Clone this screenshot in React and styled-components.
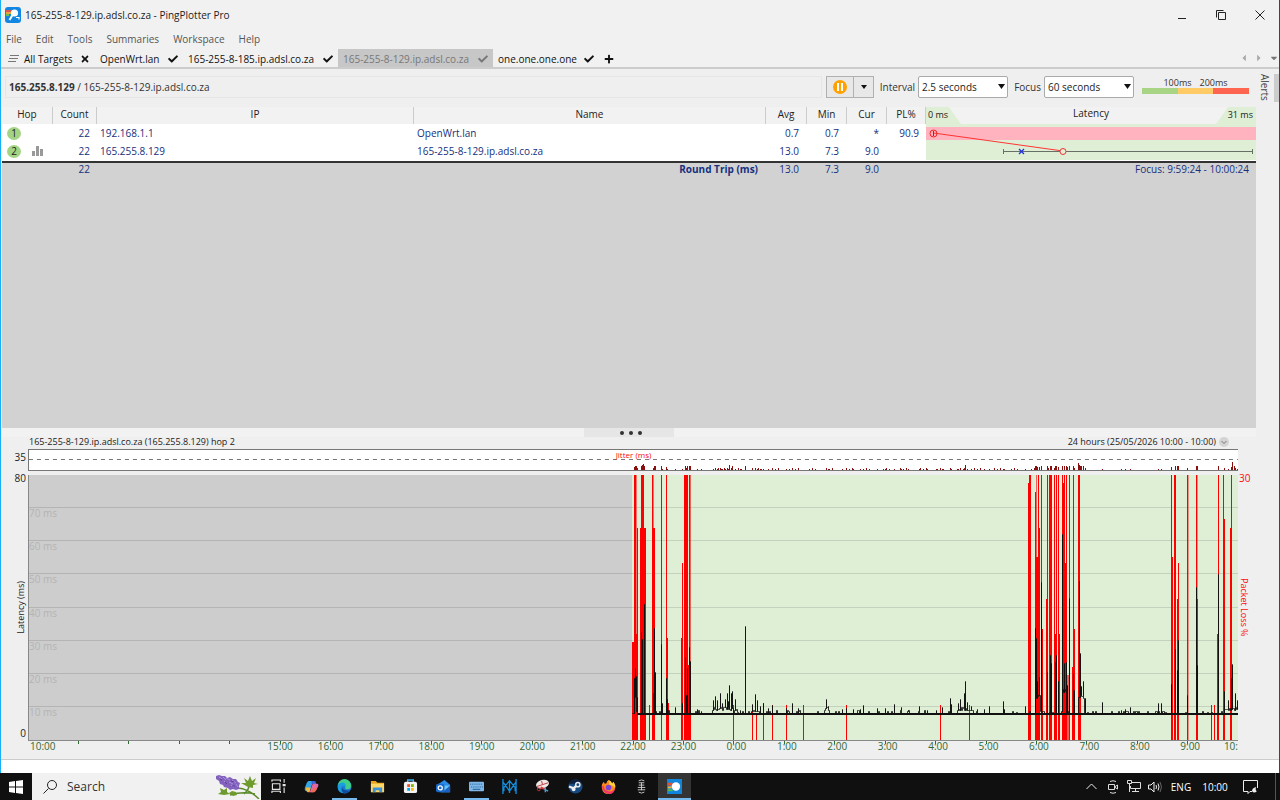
import React from "react";
import styled, { createGlobalStyle, css } from "styled-components";
import { FaCheck, FaTimes, FaPlus, FaCaretLeft, FaCaretRight, FaCaretDown } from "react-icons/fa";

const C = {
  chrome: "#f1f1f1",
  panel: "#efefef",
  line: "#cccccc",
  navy: "#16307e",
  green: "#dfefd6",
  gray: "#cdcdcd",
  red: "#fb0d0d",
};

const GlobalStyle = createGlobalStyle`
  *, *::before, *::after { box-sizing: border-box; }
  body { margin: 0; background: #fff; font: 10px/16px "Open Sans", "Noto Sans", sans-serif; color: #222; }
  button, select { font: inherit; color: inherit; margin: 0; padding: 0; border: 0; background: none; }
  svg { display: block; flex: none; }
`;

const Desktop = styled.div`
  min-height: 100vh;
  display: flex;
  flex-direction: column;
`;

const AppWindow = styled.div`
  flex: 1;
  display: flex;
  flex-direction: column;
  background: #fff;
  border-left: 1px solid #18b0f5;
  border-right: 1px solid #1d479c;
`;

/* ---------- window chrome ---------- */

const TitleBar = styled.header`
  height: 30px;
  padding-left: 4px;
  display: flex;
  align-items: center;
  background: ${C.chrome};
  color: #222;
`;
const WindowTitle = styled.h1`
  flex: 1;
  margin: 0;
  padding-left: 4px;
  font-size: 10px;
  font-weight: 400;
`;
const CaptionButton = styled.button`
  width: 39px;
  height: 30px;
  display: flex;
  align-items: center;
  justify-content: center;
`;

const MenuBar = styled.nav`
  height: 19px;
  padding: 0 0 2px 5px;
  display: flex;
  align-items: center;
  gap: 14px;
  background: ${C.chrome};
  color: #555;
`;

const TabBar = styled.div`
  height: 20px;
  display: flex;
  background: ${C.chrome};
  border-bottom: 2px solid ${C.line};
`;
const Tab = styled.button`
  width: ${(p) => p.$w}px;
  padding: 2px 5px 0;
  display: flex;
  align-items: center;
  gap: 4px;
  white-space: nowrap;
  color: #111;
  ${(p) => p.$active && css`
    background: #c7c7c7;
    color: #777;
  `}
`;
const TabLabel = styled.span`
  flex: 1;
  text-align: left;
`;
const TabScroll = styled.div`
  margin-left: auto;
  display: flex;
  align-items: center;
  gap: 5px;
  color: #aaa;
`;

/* ---------- body ---------- */

const Body = styled.div`
  flex: 1;
  display: flex;
  background: ${C.panel};
  border-bottom: 1px solid ${C.line};
`;
const Content = styled.main`
  flex: 1;
  min-width: 0;
  padding-left: 1px;
  display: flex;
  flex-direction: column;
`;
const AlertsRail = styled.aside`
  width: 23px;
  padding-top: 5px;
  display: flex;
  justify-content: space-between;
  align-items: flex-start;
`;
const AlertsButton = styled.button`
  writing-mode: vertical-rl;
  line-height: 18px;
  color: #444;
`;
const RailGrip = styled.div`
  width: 5px;
  height: 28px;
  background: ${C.line};
`;

const Toolbar = styled.div`
  height: 38px;
  padding: 0 7px 2px 3px;
  display: flex;
  align-items: center;
  color: #333;
`;
const Address = styled.div`
  flex: 1;
  height: 22px;
  margin-right: 4px;
  padding-left: 3px;
  border: 1px solid #e6e6e6;
  line-height: 20px;
`;
const PauseGroup = styled.div`
  height: 22px;
  display: flex;
  border: 1px solid #b0b0b0;
  background: #e8e8e8;
`;
const PauseButton = styled.button`
  width: ${(p) => p.$w}px;
  display: flex;
  align-items: center;
  justify-content: center;
  & + & { border-left: 1px solid #b0b0b0; }
`;
const FieldLabel = styled.label`
  width: ${(p) => p.$w}px;
  text-align: right;
  padding-right: 3px;
`;
const SelectBox = styled.span`
  position: relative;
  width: 90px;
  height: 22px;
`;
const Select = styled.select`
  appearance: none;
  width: 100%;
  height: 100%;
  padding: 0 0 0 3px;
  border: 1px solid #aaa;
  border-radius: 2px;
  background: #fff;
  color: #222;
`;
const SelectArrow = styled.svg`
  position: absolute;
  right: 3px;
  top: 8px;
  pointer-events: none;
`;
const Legend = styled.div`
  width: 107px;
  margin-left: 8px;
  padding-bottom: 2px;
`;
const LegendLabels = styled.div`
  display: flex;
  justify-content: center;
  gap: 8px;
  font-size: 9px;
  line-height: 10px;
`;
const LegendBar = styled.div`
  height: 6px;
  display: flex;
`;
const LegendPart = styled.div`
  flex: 1;
  background: ${(p) => p.$c};
`;

/* ---------- hop table ---------- */

const TracePane = styled.section`
  flex: 1;
  background: #d2d2d2;
`;
const HopTable = styled.table`
  width: 100%;
  table-layout: fixed;
  border-collapse: separate;
  border-spacing: 0;
  color: ${C.navy};
`;
const Col = styled.col`
  width: ${(p) => (p.$w ? p.$w + "px" : "auto")};
`;
const Th = styled.th`
  height: 17px;
  padding: 0;
  background: #f2f2f2;
  border-right: 1px solid ${C.line};
  color: #222;
  font-weight: 400;
  line-height: 14px;
  vertical-align: top;
`;
const LatencyTh = styled(Th)`
  border-right: 0;
`;
const LatencyHead = styled.div`
  height: 17px;
  display: flex;
  justify-content: space-between;
  line-height: 12px;
`;
const ScaleEnd = styled.span`
  width: 40px;
  background: ${C.green};
  clip-path: ${(p) => (p.$right ? "polygon(12px 0, 100% 0, 100% 100%, 0 100%)" : "polygon(0 0, 23px 0, 35px 100%, 0 100%)")};
  padding: 0 3px 0 2px;
  text-align: ${(p) => (p.$right ? "right" : "left")};
  font-size: 9px;
  line-height: 16px;
`;
const Td = styled.td`
  height: ${(p) => (p.$total ? 12 : 18)}px;
  padding: 0 ${(p) => p.$pr ?? 8}px 0 3px;
  background: ${(p) => (p.$total ? "transparent" : "#fff")};
  text-align: ${(p) => (p.$left ? "left" : "right")};
  font-weight: ${(p) => (p.$bold ? 700 : 400)};
  line-height: ${(p) => (p.$total ? 12 : 16)}px;
  white-space: nowrap;
`;
const LatencyTd = styled.td`
  padding: 0;
  background: ${C.green};
`;
const Rule = styled.td`
  height: 3px;
  padding: 0;
  background: #fff;
  border-bottom: 2px solid #333;
`;
const HopCell = styled.span`
  display: flex;
  align-items: center;
  gap: 11px;
  padding-left: 2px;
`;
const HopBadge = styled.span`
  width: 14px;
  height: 13px;
  border-radius: 50%;
  background: #a3d483;
  color: #222;
  text-align: center;
  line-height: 13px;
`;

/* ---------- timeline ---------- */

const Splitter = styled.div`
  height: 9px;
  display: flex;
  justify-content: center;
  background: #f2f2f2;
`;
const SplitGrip = styled.div`
  width: 90px;
  padding-left: 4px;
  display: flex;
  align-items: center;
  justify-content: center;
  gap: 5px;
  background: #e6e6e6;
`;
const Dot = styled.i`
  width: 4px;
  height: 4px;
  border-radius: 50%;
  background: #333;
`;
const Timeline = styled.section`
  display: grid;
  grid-template-columns: 26px 1fr 18px;
  grid-template-rows: 12px 22px 4px 265px 19px;
  font-size: 10px;
  line-height: 12px;
`;
const GraphHead = styled.div`
  grid-column: 2 / 4;
  display: flex;
  justify-content: space-between;
  align-items: flex-start;
  padding: 0 27px 0 1px;
  font-size: 9px;
  line-height: 10px;
`;
const PeriodButton = styled.button`
  display: flex;
  align-items: center;
  gap: 3px;
  line-height: 10px;
`;
const AxisValue = styled.div`
  grid-column: 1;
  padding: 2px 2px 0 0;
  text-align: right;
`;
const JitterPlot = styled.div`
  grid-column: 2;
  position: relative;
  background: #fff;
  border: solid #777;
  border-width: 1px 0 1px 1px;
`;
const JitterTitle = styled.span`
  position: absolute;
  inset: 0;
  text-align: center;
  font-size: 8px;
  line-height: 10px;
  color: ${C.red};
`;
const SideAxis = styled.div`
  grid-column: ${(p) => (p.$right ? 3 : 1)};
  grid-row: 4;
  display: grid;
  grid-template-rows: 1fr auto 1fr;
  justify-items: ${(p) => (p.$right ? "start" : "end")};
  padding: ${(p) => (p.$right ? "0 0 0 1px" : "0 2px 0 0")};
  line-height: 10px;
  color: ${(p) => (p.$right ? C.red : "#222")};
`;
const AxisEnd = styled.span`
  align-self: ${(p) => (p.$bottom ? "end" : "start")};
  line-height: ${(p) => (p.$bottom ? 14 : 6)}px;
`;
const AxisName = styled.span`
  writing-mode: vertical-rl;
  font-size: 9px;
  line-height: 10px;
  transform: ${(p) => (p.$up ? "rotate(180deg)" : "none")};
`;
const Plot = styled.div`
  grid-column: 2;
  grid-row: 4;
  position: relative;
  border-left: 1px solid #888;
`;
const StretchSvg = styled.svg`
  width: 100%;
  height: 100%;
`;
const GridLabels = styled.div`
  position: absolute;
  inset: 0;
  display: grid;
  grid-template-rows: repeat(8, 1fr);
  color: #b4b4b4;
  line-height: 10px;
`;
const HourAxis = styled.div`
  grid-column: 2;
  grid-row: 5;
  display: flex;
  overflow: hidden;
  border-top: 1px solid #888;
  color: #2f6a35;
  line-height: 10px;
`;
const Hour = styled.span`
  flex: ${(p) => (p.$edge ? 1 : 2)} 1 0;
  min-width: 0;
  height: 12px;
  text-align: ${(p) => (p.$edge ? "left" : "center")};
  text-indent: ${(p) => (p.$edge === "end" ? 11 : p.$edge ? 2 : p.$short ? 5 : 0)}px;
  white-space: nowrap;
  ${(p) => !p.$edge && css`
    background: linear-gradient(#2f6a35, #2f6a35) center top / 1px 3px no-repeat;
  `}
`;

/* ---------- taskbar ---------- */

const WhiteStrip = styled.div`
  height: 13px;
  background: #fff;
`;
const Taskbar = styled.footer`
  height: 27px;
  display: flex;
  background: #101010;
  color: #fff;
`;
const StartButton = styled.button`
  width: 32px;
  display: flex;
  align-items: center;
  justify-content: center;
`;
const SearchButton = styled.button`
  width: 229px;
  padding-left: 11px;
  display: flex;
  align-items: center;
  gap: 10px;
  background: #f1f1f1;
  color: #333;
  font-size: 12px;
`;
const SearchLabel = styled.span`
  flex: 1;
  text-align: left;
`;
const TaskButton = styled.button`
  width: 33px;
  display: flex;
  align-items: center;
  justify-content: center;
  &:nth-of-type(3) { width: 34px; }
  ${(p) => p.$running && css`
    background: linear-gradient(#76b9ed, #76b9ed) center bottom / 25px 2px no-repeat;
  `}
  ${(p) => p.$active && css`
    background: linear-gradient(#76b9ed, #76b9ed) center bottom / 100% 2px no-repeat #343434;
  `}
`;
const Tray = styled.div`
  margin-left: auto;
  display: flex;
  align-items: center;
`;
const TrayButton = styled.button`
  width: ${(p) => p.$w}px;
  height: 27px;
  display: flex;
  align-items: center;
  justify-content: center;
`;
const ShowDesktop = styled.button`
  width: 5px;
  height: 27px;
  margin-left: 8px;
  border-left: 1px solid #555;
`;

/* ---------- data ---------- */

const TABS = [
  { label: "OpenWrt.lan", w: 88 },
  { label: "165-255-8-185.ip.adsl.co.za", w: 155 },
  { label: "165-255-8-129.ip.adsl.co.za", w: 155, active: true },
  { label: "one.one.one.one", w: 106 },
];

const HOPS = [
  { hop: 1, ip: "192.168.1.1", name: "OpenWrt.lan", avg: "0.7", min: "0.7", cur: "*", pl: "90.9" },
  { hop: 2, ip: "165.255.8.129", name: "165-255-8-129.ip.adsl.co.za", avg: "13.0", min: "7.3", cur: "9.0", pl: "" },
];

/* packet loss bars: x, width, top, opacity */
const LOSS = [
  [603, 2, 167], [605, 2, 0], [607, 1, 0, 0.5], [607, 1, 159], [608, 1, 53],
  [611, 6, 53], [612, 3, 0], [620, 1, 230],
  [623, 1, 0], [624, 1, 0, 0.5], [624, 2, 53], [632, 1, 0],
  [637, 1, 0], [637, 2, 163], [639, 1, 228], [652, 1, 163], [653, 1, 88],
  [655, 4, 0], [655, 7, 190], [660, 1, 0], [661, 1, 0, 0.6],
  [704, 1, 230], [723, 1, 230], [727, 1, 238], [734, 1, 228], [743, 1, 230], [757, 1, 230], [774, 1, 230],
  [817, 1, 230], [911, 1, 230], [940, 1, 230],
  [999, 1, 8], [1000, 2, 0], [1006, 1, 17], [1006, 5, 82], [1007, 1, 0, 0.6], [1009, 1, 0], [1010, 1, 53],
  [1012, 1, 0], [1013, 1, 154], [1017, 1, 124], [1018, 1, 0], [1020, 3, 0],
  [1025, 1, 0], [1025, 3, 159], [1027, 1, 0], [1029, 1, 0], [1030, 1, 159],
  [1033, 1, 0], [1034, 1, 8], [1035, 1, 0], [1034, 4, 88], [1037, 1, 0], [1038, 2, 200, 0.6], [1040, 1, 0],
  [1043, 1, 192], [1044, 1, 0], [1045, 1, 154], [1049, 2, 0], [1051, 1, 192],
  [1142, 1, 0], [1143, 1, 82], [1145, 1, 195], [1145, 2, 0], [1148, 1, 124], [1149, 1, 88],
  [1158, 1, 0], [1159, 1, 0, 0.4], [1167, 1, 0], [1168, 1, 0, 0.4], [1168, 1, 124],
  [1182, 1, 230], [1185, 1, 230], [1188, 1, 159], [1189, 1, 0], [1194, 1, 0], [1195, 1, 44], [1201, 1, 53], [1202, 1, 0],
];

/* latency peaks: x, top */
const PEAKS = [
  [605, 203], [606, 193], [607, 201], [608, 222], [612, 157], [613, 164], [615, 129], [624, 218], [625, 153], [626, 197],
  [632, 169], [633, 228], [637, 203], [638, 224], [646, 232], [653, 228], [656, 182], [657, 220], [658, 193], [660, 172], [661, 186],
  [668, 234], [672, 236], [684, 225], [686, 221], [688, 225], [691, 218], [693, 228], [696, 224], [698, 218], [699, 226], [700, 210], [702, 218], [703, 216],
  [706, 224], [711, 235], [716, 151], [723, 229], [726, 219], [728, 225], [731, 231], [734, 228], [739, 233], [743, 230], [757, 233], [763, 228], [769, 233],
  [797, 224], [799, 231], [813, 234], [817, 233], [824, 234], [831, 234], [834, 230], [848, 233], [856, 233], [865, 229], [872, 232], [879, 235], [890, 231],
  [898, 235], [907, 235], [913, 232], [921, 223], [922, 229], [929, 228], [931, 224], [935, 218], [936, 206], [938, 227], [942, 231], [948, 234], [955, 234],
  [960, 231], [974, 226], [975, 234], [996, 231], [1006, 153], [1007, 163], [1008, 206], [1010, 202], [1012, 107], [1018, 197],
  [1021, 180], [1022, 188], [1026, 187], [1027, 180], [1029, 206], [1033, 59], [1035, 188], [1037, 187], [1038, 210], [1040, 123], [1044, 198], [1045, 215],
  [1050, 106], [1051, 178], [1052, 211], [1054, 206], [1056, 223], [1073, 227], [1092, 235], [1096, 234], [1101, 232], [1129, 228], [1132, 228],
  [1142, 209], [1146, 174], [1148, 195], [1149, 165], [1158, 220], [1167, 112], [1168, 190], [1189, 99], [1195, 216], [1199, 225],
  [1202, 203], [1203, 189], [1206, 218], [1208, 225],
];
const peakAt = new Map(PEAKS);

/* stretches where the line runs above its usual level: from, to, level */
const RAISED = [
  [606, 608, 222], [684, 705, 234], [706, 710, 236], [723, 730, 235], [797, 801, 234], [929, 944, 234],
  [1007, 1012, 222], [1034, 1038, 216], [1050, 1056, 222], [1196, 1209, 234],
];
const levelAt = (x) => {
  const n = Math.floor(Math.abs(Math.sin(x * 12.9898) * 43758.5453) % 1 * 20);
  const r = RAISED.find(([a, b]) => x >= a && x < b);
  if (r) return r[2] + (n % 4) - 2;
  if (n === 5) return x < 960 ? 235 : 237;
  return n === 3 || n === 7 ? 236 : 238;
};
let latencyPath = "M603 238";
for (let x = 604; x < 1209; x++) {
  const base = levelAt(x);
  latencyPath += peakAt.has(x) ? `V${base}H${x}V${peakAt.get(x)}V${base}` : `V${base}H${x}`;
}

const JITTER = PEAKS.map(([x, top]) => [x, Math.max(1, Math.min(4, Math.round((240 - top) / 11)))]).concat(
  [[614, 6], [613, 5], [1049, 7], [1050, 5], [1052, 4], [1054, 4], [1203, 8], [1205, 4], [936, 5], [700, 5], [703, 4]],
  Array.from({ length: 60 }, (_, i) => [686 + ((i * 37) % 350), 1 + (i % 2)]),
);

/* 24 hours from 10:00; the first hours are ticks only and the last label is cut at the window's edge */
const HOURS = Array.from({ length: 25 }, (_, i) => {
  if (i > 0 && i < 5) return "";
  return i === 24 ? "10:" : `${(10 + i) % 24}:00`;
});

/* ---------- drawings ---------- */

const AppLogo = () => (
  <svg width="16" height="16" viewBox="0 0 16 16">
    <rect width="16" height="16" rx="3" fill="#1186e2" />
    <path d="M1 3h6v2H1z" fill="#e2574c" />
    <path d="M1 5h5v2H1z" fill="#e8a33d" />
    <path d="M1 7h3v2H1z" fill="#6abf4b" />
    <circle cx="9.500" cy="6" r="3.600" fill="#fff" />
    <path d="M7.500 8 4.500 13" stroke="#fff" strokeWidth="2" fill="none" />
    <path d="M11 10.500h3v2" stroke="#fff" strokeWidth="1.200" fill="none" />
  </svg>
);

const LatencyGraph = () => (
  <StretchSvg height="36" viewBox="0 0 330 36" preserveAspectRatio="none" role="img" aria-label="Latency by hop">
    <rect y="3" width="330" height="13" fill="#ffb3be" />
    <path d="M7.500 9 137 27" stroke="#f33" fill="none" />
    <path d="M77.500 25v5M77.500 27.500H326.500M326.500 25v5" stroke="#667066" fill="none" />
    <path d="m93 25 5 5m0-5-5 5" stroke="#2233dd" strokeWidth="1.300" fill="none" />
    <circle cx="7.500" cy="9.500" r="3.500" stroke="#e22" fill="none" />
    <path d="M7.500 7v5" stroke="#544" fill="none" />
    <circle cx="137" cy="27.500" r="3" stroke="#e33" fill={C.green} />
  </StretchSvg>
);

const Lavender = () => (
  <svg width="46" height="25" viewBox="0 0 46 25">
    <path d="M23 14Q34 15 44 25M15 21Q28 17 40 20M34 11Q34 16 29 20" stroke="#5b8a2a" strokeWidth="1.500" fill="none" />
    <path d="m1 2 3-1 3 1 3 0 2 2 3-1 3 2 3 0 2 3 2 1-1 3 0 3-3 1-3-1-3 1-2-2-4-1-1-2-3-1-1-3-3-2z" fill="#8362bd" />
    <path d="m4 3 3 2m1-2 3 3m0-2 4 2m-6 1 3 3m2-2 4 2m-1-4 4 3m-5 2 3 2m2-3 2 3" stroke="#a891d8" strokeWidth="1" />
    <path d="m5 5 2 1m3 2 2 2m4-3 3 1m-2 4 3 0" stroke="#5d3e98" strokeWidth="1" />
    <path d="m33 13-7-4 5 0-2-5 4 3 2-5 2 5 4-3-2 5 4 1-5 1 0 3zM9 21l-6-1 3-2-1-4 4 2 3-2 0 4 3 2zM18 22l-4-3 3-2 4 1 1 3z" fill="#6f9a2e" />
  </svg>
);

const TASK_ICONS = [
  { name: "Task View", art: (
    <path d="M1 3V1h9v2M1 15v-2h9v2M1.500 5h8v6h-8zM14 0v4M14 9v6M13 6h2v1h-2z" stroke="#e4e4e4" strokeWidth="1.200" fill="none" />
  ) },
  { name: "Copilot", art: (
    <>
      <path d="M5 2h5l-4 11H3q-3 0-2-4l2-5q1-2 2-2z" fill="#34a6e6" />
      <path d="M10 2q2 0 3 3h1q2 0 1 3l-2 4q-1 2-3 2H6l4-11z" fill="#e265a6" />
      <path d="M2 9h5l-1 5H4q-2-1-2-5z" fill="#f3b93b" />
      <path d="m8 2 4 0 1 3H8z" fill="#3a62d8" /><path d="m11 9 3 1-3 4H7z" fill="#f06b4f" />
    </>
  ) },
  { name: "Edge", running: true, art: (
    <>
      <circle cx="8" cy="8" r="7.500" fill="#1b7fd4" />
      <path d="M1 7a7 7 0 0 1 14 0q0 4-4 4-3 0-2-3-1-3-4-3-3 0-4 2z" fill="#3fcf86" />
      <path d="M1 7q2-4 6-3 3 1 2 4-3-2-5 1-1 4 3 6Q0 15 1 7z" fill="#1b9de0" />
      <path d="M6 9q0 4 8 3-3 4-7 3-3-3-1-6z" fill="#0f4c9e" />
    </>
  ) },
  { name: "File Explorer", art: (
    <>
      <path d="M1 2h5l2 2h7v10H1z" fill="#e8a51c" /><path d="M1 5h14v9H1z" fill="#fcd667" />
      <path d="M3 9h10v5h-3v-2H6v2H3z" fill="#3a92dd" />
    </>
  ) },
  { name: "Store", art: (
    <>
      <path d="M5 4V1h6v3" stroke="#3cb1f0" strokeWidth="1.500" fill="none" />
      <rect x="1" y="3" width="14" height="12" rx="2" fill="#f3f3f3" />
      <path d="M4.500 5.500h3v3h-3z" fill="#f25022" /><path d="M8.500 5.500h3v3h-3z" fill="#7fba00" />
      <path d="M4.500 9.500h3v3h-3z" fill="#00a4ef" /><path d="M8.500 9.500h3v3h-3z" fill="#ffb900" />
    </>
  ) },
  { name: "Outlook", art: (
    <>
      <path d="M3 5 9 1l6 5v8H5z" fill="#2a8be8" /><path d="m5 7 10 0v7H5z" fill="#66c5f5" /><path d="m15 7-8 7h8z" fill="#1b5fc4" />
      <rect y="5" width="9" height="9" rx="2" fill="#1769c9" /><circle cx="4.500" cy="9.500" r="2.200" stroke="#fff" strokeWidth="1.300" fill="none" />
    </>
  ) },
  { name: "Keyboard", running: true, art: (
    <>
      <rect x="0" y="3" width="16" height="10" rx="1" fill="#7db8e8" />
      <path d="M1 5.500h14M2 8.500h13" stroke="#225a90" strokeDasharray="1 1" /><path d="M4 11h8" stroke="#225a90" />
    </>
  ) },
  { name: "Network monitor", art: (
    <path d="M1 0v16M15 0v16M8 1v14M1 3l7 10M15 3 8 13M8 2 2 9v4M8 2l6 7v4" stroke="#148fdd" fill="none" strokeWidth="1.400" />
  ) },
  { name: "Snipping Tool", art: (
    <>
      <ellipse cx="8" cy="5.500" rx="7" ry="4.500" fill="#f0e6e6" transform="rotate(-15 8 5.500)" />
      <path d="M2 8 8 6l-1-4M8 6l6-2" stroke="#b33" fill="none" />
      <path d="m6 9 5 2" stroke="#d33" strokeWidth="2" /><circle cx="4" cy="11" r="1.500" fill="none" stroke="#d33" />
      <path d="M11 9v5m-1-3 4 2" stroke="#4aa0d8" strokeWidth="1.500" />
    </>
  ) },
  { name: "Steam", art: (
    <>
      <circle cx="8" cy="8" r="7.500" fill="#174a80" /><path d="M1 5a7.500 7.500 0 0 1 14 0z" fill="#0e2142" />
      <path d="m1 8 5 2 4-4" stroke="#eee" strokeWidth="2.500" fill="none" />
      <circle cx="10.500" cy="6" r="3" fill="#eee" /><circle cx="10.500" cy="6" r="1.500" fill="#174a80" /><circle cx="6" cy="11" r="2" fill="#eee" />
    </>
  ) },
  { name: "Firefox", art: (
    <>
      <path d="M8 1q3 1 4 4l1-2q3 4 2 7-2 6-7 6-6 0-7-6-1-4 2-7l1 2q2 0 2-1 0-2 2-3z" fill="#ff8a1f" />
      <path d="M8 1q3 1 4 4l1-2q3 4 2 6-3-3-6-3z" fill="#ffd43a" />
      <path d="M1 8q1 7 7 8 6 0 7-6-3 4-7 3-5-1-5-6z" fill="#f0376a" />
      <circle cx="8" cy="9" r="3" fill="#7a45d6" />
    </>
  ) },
  { name: "Database tool", art: (
    <path d="M5 2q3-2 6 0M5 4h6M5 6.500h6M4 9h8M4 11.500h8M5 14q3 2 6 0M8 4v8" stroke="#ccc" fill="none" />
  ) },
  { name: "PingPlotter", active: true, art: (
    <>
      <rect width="16" height="16" fill="#0f86dc" /><path d="M1 4h5v3H1z" fill="#e8532f" />
      <path d="M1 8h4v2H1z" fill="#f2b632" /><path d="M1 11h5v2H1z" fill="#58b947" /><circle cx="9.500" cy="8" r="4.500" fill="#fff" />
    </>
  ) },
];

const ComboArrow = () => (
  <SelectArrow width="7" height="5" viewBox="0 0 7 5"><path d="M0 0h7L3.500 5z" fill="#111" /></SelectArrow>
);

/* ---------- sections ---------- */

const Trace = () => (
  <TracePane>
    <HopTable>
      <colgroup>
        {[51, 44, 317, 0, 41, 40, 40, 39, 330].map((w, i) => <Col key={i} $w={w} />)}
      </colgroup>
      <thead>
        <tr>
          {["Hop", "Count", "IP", "Name", "Avg", "Min", "Cur", "PL%"].map((h) => <Th key={h} scope="col">{h}</Th>)}
          <LatencyTh scope="col">
            <LatencyHead><ScaleEnd>0 ms</ScaleEnd>Latency<ScaleEnd $right>31 ms</ScaleEnd></LatencyHead>
          </LatencyTh>
        </tr>
      </thead>
      <tbody>
        {HOPS.map((h, i) => (
          <tr key={h.hop}>
            <Td $left>
              <HopCell>
                <HopBadge>{h.hop}</HopBadge>
                {i === 1 && (
                  <svg width="12" height="10" viewBox="0 0 12 10"><path d="M0 5h3v5H0zM4 0h3v10H4zM8 3h3v7H8z" fill="#999" /></svg>
                )}
              </HopCell>
            </Td>
            <Td $pr={7}>22</Td>
            <Td $left>{h.ip}</Td>
            <Td $left>{h.name}</Td>
            <Td>{h.avg}</Td>
            <Td>{h.min}</Td>
            <Td>{h.cur}</Td>
            <Td $pr={7}>{h.pl}</Td>
            {i === 0 && <LatencyTd rowSpan={2}><LatencyGraph /></LatencyTd>}
          </tr>
        ))}
        <tr><Rule colSpan={9} /></tr>
      </tbody>
      <tfoot>
        <tr>
          <Td $total />
          <Td $total $pr={7}>22</Td>
          <Td $total />
          <Td $total $bold>Round Trip (ms)</Td>
          <Td $total>13.0</Td>
          <Td $total>7.3</Td>
          <Td $total>9.0</Td>
          <Td $total />
          <Td $total $pr={7}>Focus: 9:59:24 - 10:00:24</Td>
        </tr>
      </tfoot>
    </HopTable>
  </TracePane>
);

const TimelineGraph = () => (
  <Timeline>
    <GraphHead>
      <span>165-255-8-129.ip.adsl.co.za (165.255.8.129) hop 2</span>
      <PeriodButton>
        24 hours (25/05/2026 10:00 - 10:00)
        <svg width="10" height="10" viewBox="0 0 10 10"><circle cx="5" cy="5" r="5" fill="#d4d4d4" /><path d="m2.500 4 2.500 2.500L7.500 4" stroke="#777" fill="none" /></svg>
      </PeriodButton>
    </GraphHead>
    <AxisValue>35</AxisValue>
    <JitterPlot>
      <StretchSvg viewBox="0 0 1209 20" preserveAspectRatio="none" role="img" aria-label="Jitter">
        <path d="M0 9.500H1209" stroke="#777" strokeDasharray="4 4" />
        {JITTER.map(([x, h], i) => <rect key={i} x={x} y={20 - h} width="1" height={h} fill="#8a1010" />)}
      </StretchSvg>
      <JitterTitle>Jitter (ms)</JitterTitle>
    </JitterPlot>
    <SideAxis>
      <AxisEnd>80</AxisEnd>
      <AxisName $up>Latency (ms)</AxisName>
      <AxisEnd $bottom>0</AxisEnd>
    </SideAxis>
    <Plot>
      <StretchSvg viewBox="0 0 1209 265" preserveAspectRatio="none" role="img" aria-label="Latency and packet loss over 24 hours">
        <rect width="603" height="265" fill={C.gray} />
        <rect x="603" width="606" height="265" fill={C.green} />
        {[1, 2, 3, 4, 5, 6, 7].map((n) => (
          <rect key={n} y={Math.round(n * 33.125) - 1} width="1209" height="1" fill="#000" opacity="0.12" />
        ))}
        {LOSS.map(([x, w, top, o], i) => <rect key={i} x={x} y={top} width={w} height={265 - top} fill="#ff0000" opacity={o ?? 1} />)}
        <path d={latencyPath} transform="translate(0.5 0.5)" stroke="#111" fill="none" strokeOpacity="0.85" />
        <path d="M608 239H1209" stroke="#111" strokeWidth="2" fill="none" />
      </StretchSvg>
      <GridLabels>
        <span />
        {[70, 60, 50, 40, 30, 20, 10].map((n) => <span key={n}>{n} ms</span>)}
      </GridLabels>
    </Plot>
    <SideAxis $right>
      <AxisEnd>30</AxisEnd>
      <AxisName>Packet Loss %</AxisName>
    </SideAxis>
    <HourAxis>
      {HOURS.map((h, i) => (
        <Hour key={i} $short={h.length === 4} $edge={i === 0 ? "start" : i === 24 ? "end" : undefined}>{h}</Hour>
      ))}
    </HourAxis>
  </Timeline>
);

export default function App() {
  return (
    <Desktop>
      <GlobalStyle />
      <AppWindow>
        <TitleBar>
          <AppLogo />
          <WindowTitle>165-255-8-129.ip.adsl.co.za - PingPlotter Pro</WindowTitle>
          <CaptionButton aria-label="Minimize">
            <svg width="10" height="10" viewBox="0 0 10 10"><path d="M1 8.500h8" stroke="#222" /></svg>
          </CaptionButton>
          <CaptionButton aria-label="Restore">
            <svg width="10" height="10" viewBox="0 0 10 10"><path d="M2.500 2.500h7v7h-7zM.5 7.500v-7h7" stroke="#222" fill="none" /></svg>
          </CaptionButton>
          <CaptionButton aria-label="Close">
            <svg width="10" height="10" viewBox="0 0 10 10"><path d="m.5.5 9 9m0-9-9 9" stroke="#222" fill="none" /></svg>
          </CaptionButton>
        </TitleBar>
        <MenuBar>
          {["File", "Edit", "Tools", "Summaries", "Workspace", "Help"].map((m) => <button key={m}>{m}</button>)}
        </MenuBar>
        <TabBar>
          <Tab $w={94}>
            <svg width="14" height="10" viewBox="0 0 14 10"><path d="M4 1.500h9M3 4.500h9M2 7.500h8" stroke="#777" fill="none" /></svg>
            <TabLabel>All Targets</TabLabel>
            <FaTimes size={10} />
          </Tab>
          {TABS.map((t) => (
            <Tab key={t.label} $w={t.w} $active={t.active}>
              <TabLabel>{t.label}</TabLabel>
              <FaCheck size={10} />
            </Tab>
          ))}
          <Tab $w={24} aria-label="New target"><FaPlus size={10} /></Tab>
          <TabScroll>
            <FaCaretLeft size={10} />
            <FaCaretRight size={10} />
            <FaCaretDown size={10} color="#777" />
          </TabScroll>
        </TabBar>
        <Body>
          <Content>
            <Toolbar>
              <Address><b>165.255.8.129</b> / 165-255-8-129.ip.adsl.co.za</Address>
              <PauseGroup>
                <PauseButton $w={26} aria-label="Pause">
                  <svg width="14" height="14" viewBox="0 0 14 14"><circle cx="7" cy="7" r="7" fill="#ffa200" /><path d="M5 3v8M9 3v8" stroke="#fff" strokeWidth="2" /></svg>
                </PauseButton>
                <PauseButton $w={20} aria-label="Pause options">
                  <svg width="6" height="4" viewBox="0 0 6 4"><path d="M0 0h6L3 4z" fill="#111" /></svg>
                </PauseButton>
              </PauseGroup>
              <FieldLabel $w={44} htmlFor="interval">Interval</FieldLabel>
              <SelectBox>
                <Select id="interval"><option>2.5 seconds</option></Select>
                <ComboArrow />
              </SelectBox>
              <FieldLabel $w={36} htmlFor="focus">Focus</FieldLabel>
              <SelectBox>
                <Select id="focus"><option>60 seconds</option></Select>
                <ComboArrow />
              </SelectBox>
              <Legend>
                <LegendLabels><span>100ms</span><span>200ms</span></LegendLabels>
                <LegendBar><LegendPart $c="#a8d585" /><LegendPart $c="#fecb66" /><LegendPart $c="#fe6550" /></LegendBar>
              </Legend>
            </Toolbar>
            <Trace />
            <Splitter><SplitGrip><Dot /><Dot /><Dot /></SplitGrip></Splitter>
            <TimelineGraph />
          </Content>
          <AlertsRail>
            <AlertsButton>Alerts</AlertsButton>
            <RailGrip />
          </AlertsRail>
        </Body>
        <WhiteStrip />
      </AppWindow>
      <Taskbar>
        <StartButton aria-label="Start">
          <svg width="14" height="14" viewBox="0 0 14 14"><path d="m0 2 6-1v5.500H0zM7 1l7-1v6.500H7zM0 7.500h6V13l-6-1zM7 7.500h7V14l-7-1z" fill="#fff" /></svg>
        </StartButton>
        <SearchButton>
          <svg width="14" height="14" viewBox="0 0 14 14"><circle cx="9" cy="5" r="4.500" stroke="#222" fill="none" /><path d="m5.500 8.500-5 5" stroke="#222" /></svg>
          <SearchLabel>Search</SearchLabel>
          <Lavender />
        </SearchButton>
        {TASK_ICONS.map((t) => (
          <TaskButton key={t.name} aria-label={t.name} $running={t.running} $active={t.active}>
            <svg width="15" height="15" viewBox="0 0 16 16">{t.art}</svg>
          </TaskButton>
        ))}
        <Tray>
          <TrayButton $w={22} aria-label="Hidden icons">
            <svg width="11" height="7" viewBox="0 0 11 7"><path d="m.5 6 5-5 5 5" stroke="#eee" fill="none" /></svg>
          </TrayButton>
          <TrayButton $w={21} aria-label="Camera">
            <svg width="12" height="14" viewBox="0 0 12 14"><path d="M1.500 4.500h6v5h-6zM7.500 7l3-2v4zM3 1.500q3-1.500 6 0M3 12.500q3 1.500 6 0" stroke="#ddd" fill="none" /></svg>
          </TrayButton>
          <TrayButton $w={21} aria-label="Network">
            <svg width="14" height="13" viewBox="0 0 14 13"><path d="M5 2.500h8.500v6h-10V6M8.500 9v2.500M5 11.500h7M.5.500h4v3h-4zM2.500 4v8" stroke="#ddd" fill="none" /></svg>
          </TrayButton>
          <TrayButton $w={21} aria-label="Volume">
            <svg width="14" height="12" viewBox="0 0 14 12"><path d="M.5 4v4H3l3 3V1L3 4zM8 4q1 2 0 4M10 2.500q2 3.500 0 7" stroke="#eee" fill="none" /><path d="M12 1q3 5 0 10" stroke="#666" fill="none" /></svg>
          </TrayButton>
          <TrayButton $w={32}>ENG</TrayButton>
          <TrayButton $w={36}>10:00</TrayButton>
          <TrayButton $w={34} aria-label="Notifications">
            <svg width="15" height="14" viewBox="0 0 15 14"><path d="M9 11.500H7l-2 2v-2H.5V.5h14V8" stroke="#eee" fill="none" /><path d="M13 7q-4 1-4 4 2 3 5 0-2 0-1-4z" fill="#eee" /></svg>
          </TrayButton>
          <ShowDesktop aria-label="Show desktop" />
        </Tray>
      </Taskbar>
    </Desktop>
  );
}
